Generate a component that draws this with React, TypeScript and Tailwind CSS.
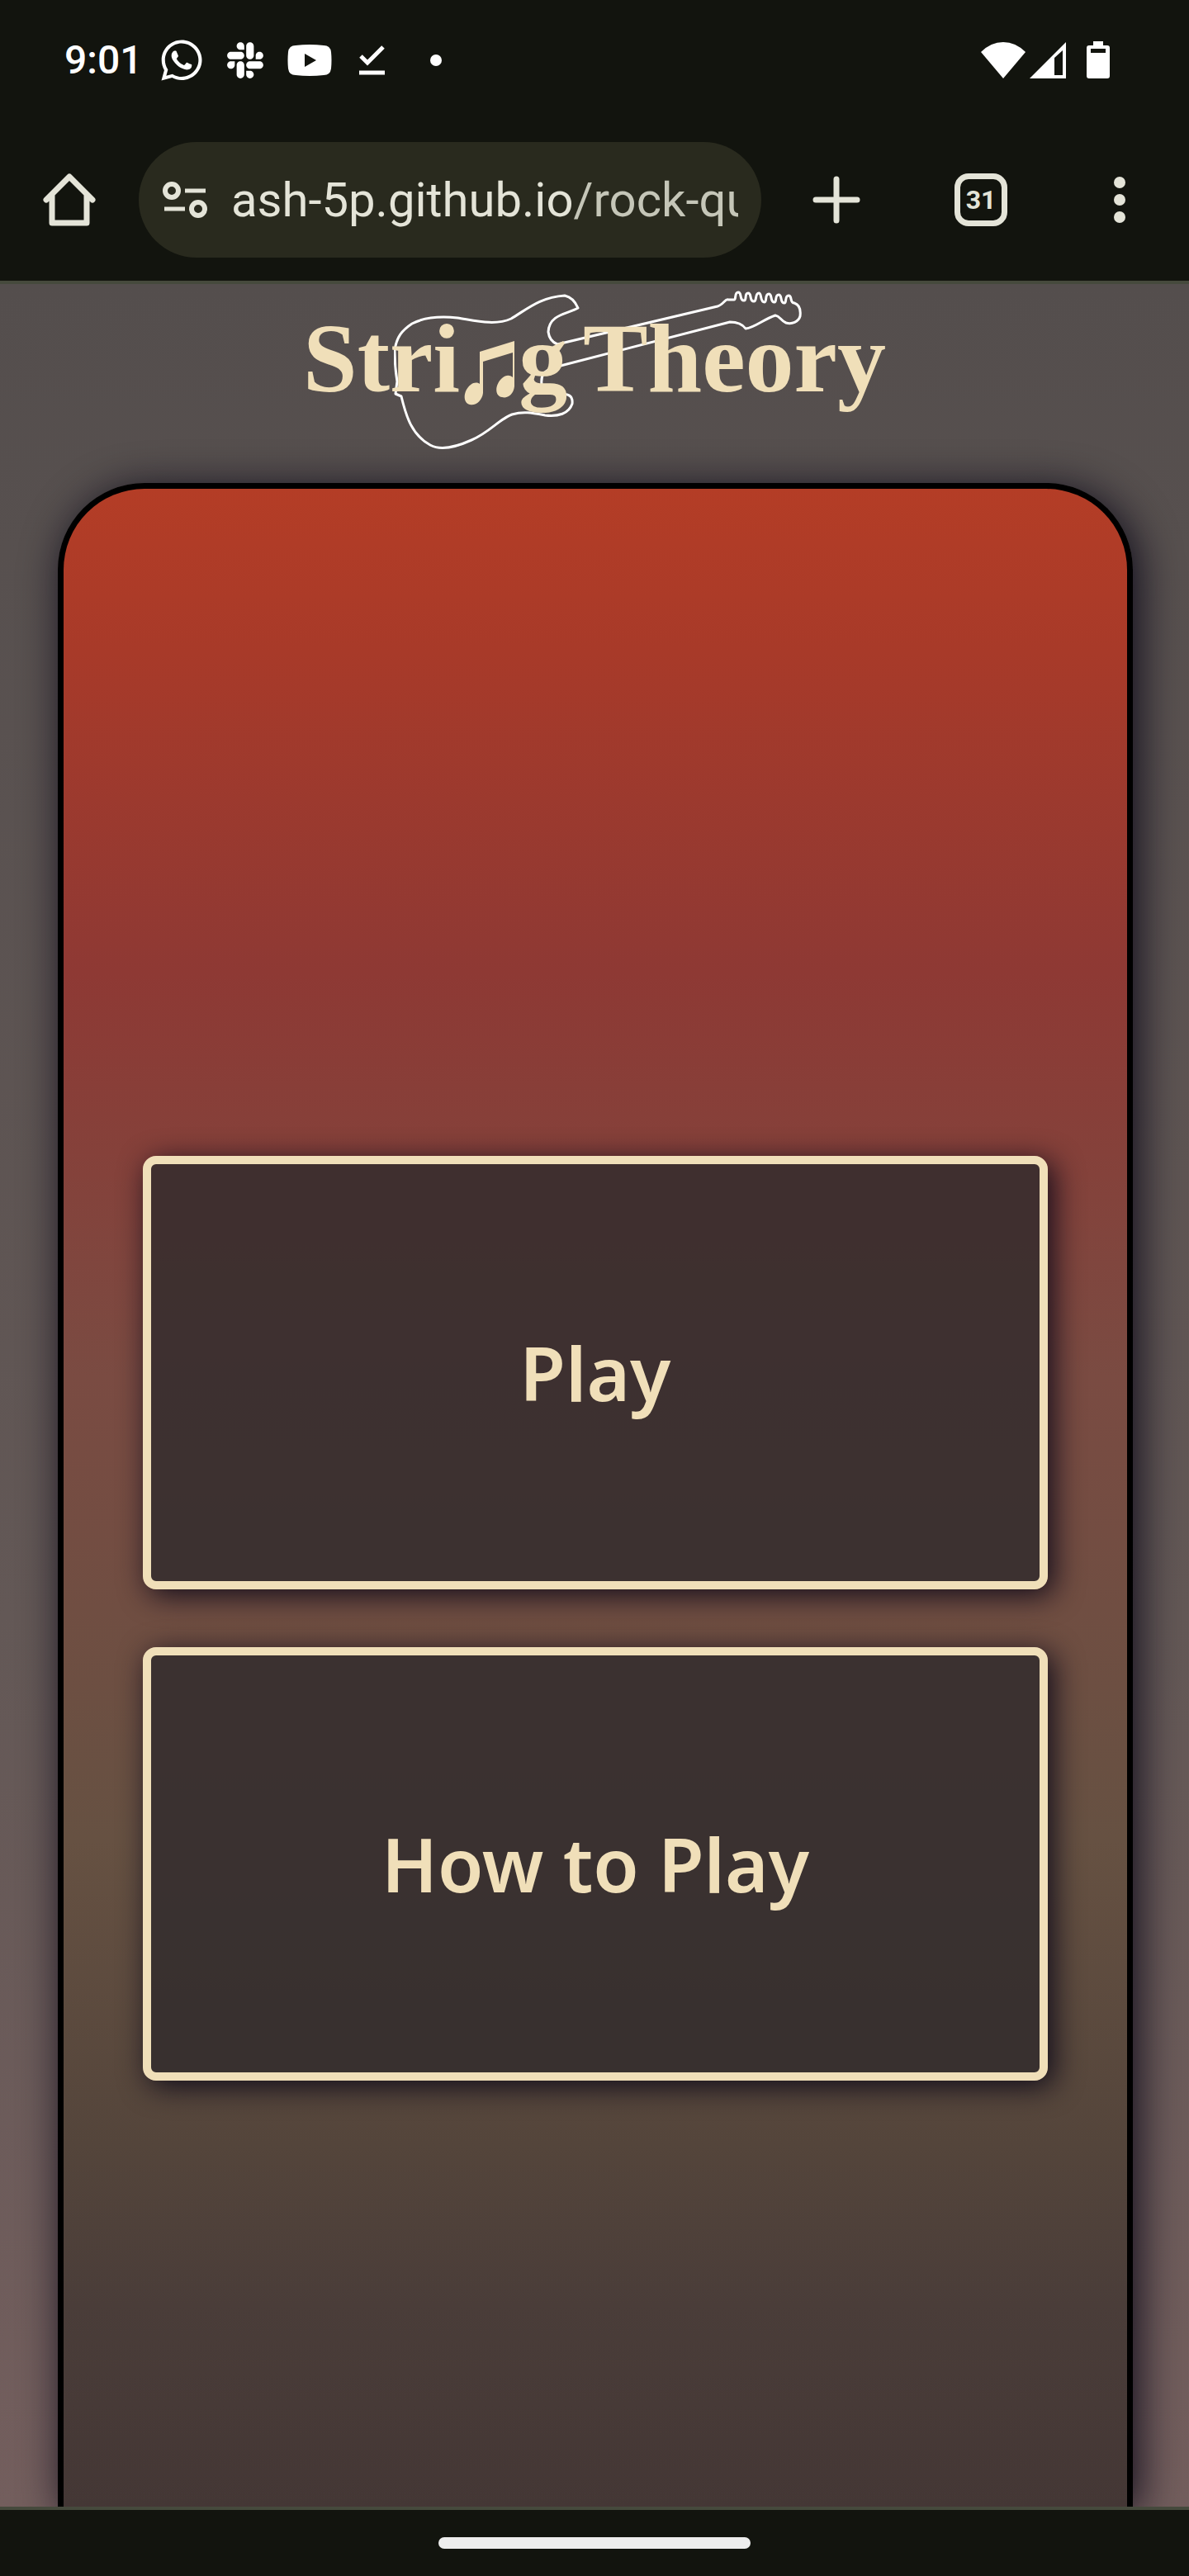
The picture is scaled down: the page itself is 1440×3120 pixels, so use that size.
import { FaWhatsapp, FaSlack } from "react-icons/fa";

function StatusBar() {
  return (
    <header className="flex h-[146px] items-center justify-between pl-[78px] pr-[96px] text-white">
      <div className="flex items-center">
        <time className="w-[94px] text-[48px] leading-none font-medium">9:01</time>
        <FaWhatsapp className="ml-5 size-[56px]" aria-label="WhatsApp" />
        <FaSlack className="ml-6 size-[50px]" aria-label="Slack" />
        <svg className="ml-[26px] h-[38px] w-[54px]" viewBox="0 0 54 38" aria-label="YouTube">
          <path fill="currentColor" fillRule="evenodd" d="M10 1Q27-1 44 1Q52 1 53 9Q54 19 53 29Q52 37 44 37Q27 39 10 37Q2 37 1 29Q0 19 1 9Q2 1 10 1ZM21 11V27L35 19Z" />
        </svg>
        <svg className="ml-8 h-[38px] w-[34px]" viewBox="0 0 34 38" aria-label="Download complete">
          <path fill="none" stroke="currentColor" strokeWidth="5" d="M3 14L11 22L30 3M1 34H32" />
        </svg>
        <span className="ml-[53px] size-[14px] rounded-full bg-white" />
      </div>
      <div className="flex items-center">
        <svg className="h-[46px] w-[54px]" viewBox="0 0 54 46" aria-label="Wi-Fi">
          <path fill="currentColor" d="M0 13Q12 1 27 1Q42 1 54 13L27 45Z" />
        </svg>
        <svg className="ml-1 h-[46px] w-[46px]" viewBox="0 0 46 46" aria-label="Signal">
          <path fill="currentColor" fillRule="evenodd" d="M45 1V45H1ZM31 20V41H41V11Z" />
        </svg>
        <svg className="ml-6 h-[46px] w-[28px]" viewBox="0 0 28 46" aria-label="Battery">
          <path fill="currentColor" fillRule="evenodd" d="M8 0H20V5H25Q28 5 28 8V42Q28 45 25 45H3Q0 45 0 42V8Q0 5 3 5H8ZM5 9V14H23V9Z" />
        </svg>
      </div>
    </header>
  );
}

function BrowserBar() {
  return (
    <nav className="flex h-[194px] items-center pr-[77px] pb-0.5 pl-[52px] text-[#e4e4d8]">
      <button aria-label="Home">
        <svg className="size-[64px]" viewBox="0 0 64 64">
          <path fill="none" stroke="currentColor" strokeWidth="7" strokeLinejoin="round" strokeLinecap="round" d="M4 32L32 4L60 32M11 26V60H53V26" />
        </svg>
      </button>
      <button className="ml-[52px] flex h-[140px] min-w-0 flex-1 items-center rounded-full bg-[#292a1e] pr-7 pl-[29px] text-left">
        <svg className="h-[44px] w-[54px] shrink-0" viewBox="0 0 54 44" aria-hidden="true">
          <g fill="none" stroke="currentColor" strokeWidth="6">
            <circle cx="11" cy="11" r="8" />
            <circle cx="43" cy="33" r="8" />
            <path strokeWidth="5" d="M27 11H52M2 33H27" />
          </g>
        </svg>
        <span className="ml-[29px] min-w-0 flex-1 overflow-hidden text-[58px] leading-[80px] whitespace-nowrap">
          ash-5p.github.io<span className="text-[#c5c6b8]">/rock-qu</span>
        </span>
      </button>
      <button className="ml-[62px]" aria-label="New tab">
        <svg className="size-[58px]" viewBox="0 0 58 58">
          <path stroke="currentColor" strokeWidth="7" strokeLinecap="round" d="M29 4V54M4 29H54" />
        </svg>
      </button>
      <button aria-label="31 open tabs" className="ml-[114px] flex size-[64px] items-center justify-center rounded-[17px] border-[7px] border-[#e4e4d8] text-[32px] leading-none font-bold">
        31
      </button>
      <button aria-label="Menu" className="ml-[129px] flex flex-col gap-[7px]">
        <span className="size-[14px] rounded-full bg-[#e4e4d8]" />
        <span className="size-[14px] rounded-full bg-[#e4e4d8]" />
        <span className="size-[14px] rounded-full bg-[#e4e4d8]" />
      </button>
    </nav>
  );
}

function Logo() {
  return (
    <h1 className="relative mx-auto flex h-[241px] w-[706px] items-start justify-between pt-[16px] font-['Liberation_Serif',serif] text-[118px] leading-[150px] font-bold whitespace-nowrap text-[#f0dfb9]">
      <svg className="absolute top-0 left-[110px] h-[241px] w-[510px]" viewBox="478 344 510 241" aria-hidden="true">
        <g fill="none" stroke="#fff" strokeWidth="3" strokeLinejoin="round">
          <path d="M479 425C481 408 488 400 500 392C515 384 535 383 555 385C575 388 600 395 620 386C640 374 655 360 685 358C694 360 698 366 701 373C690 380 666 380 665 402C666 410 671 415 676 417L870 371C877 369 880 361 883 363L890 363C893 363 890 354 895 354C900 354 896 364 902 364C906 364 902 355 907 355C912 355 908 365 914 365C918 365 915 355 920 355C924 355 921 366 927 366C930 366 927 356 932 356C937 356 933 366 939 366C942 366 939 357 944 357C949 357 945 367 951 367C954 367 951 358 956 358C961 358 957 367 963 367C969 369 971 375 970 383C968 390 960 393 953 391C946 388 946 383 940 382C925 387 915 397 904 398C899 391 892 390 885 390L676 444C657 449 656 456 657 466M676 479C690 475 695 480 694 489C690 501 677 505 661 503C645 500 635 498 621 502C605 508 595 523 572 533C550 543 533 545 522 539C500 527 493 505 487 480L480 477L482 462C480 450 479 440 479 425" />
        </g>
      </svg>
      <span className="relative">Stri</span>
      <svg className="relative mt-[53px] h-[78px] w-[62px]" viewBox="0 0 62 78" role="img" aria-label="n">
        <path fill="currentColor" d="M19 13L61 0V55C60 65 52 70 46 68C36 66 38 52 46 45C51 41 55 41 59 44V14L23 25V63C22 72 14 79 7 77C-3 74 0 59 8 53C12 50 16 50 19 52Z" />
      </svg>
      <span className="relative">g</span>
      <span className="relative ml-[14px]">Theory</span>
    </h1>
  );
}

function MenuButton({ children }: { children: string }) {
  return (
    <button className="h-[525px] w-full rounded-[16px] border-[10px] border-[#f0dfb9] bg-[#312b2d]/83 font-['Noto_Sans',sans-serif] text-[90px] font-semibold text-[#f0dfb9] shadow-[7px_7px_35px_rgba(8,5,22,0.9)]">
      {children}
    </button>
  );
}

export default function App() {
  return (
    <div className="flex min-h-screen flex-col bg-[#12140e] font-['Roboto',sans-serif]">
      <StatusBar />
      <BrowserBar />
      <main className="flex flex-1 flex-col overflow-hidden border-y-4 border-[#464a3d] bg-[linear-gradient(#544e4d,#635856_60%,#735e5d)]">
        <Logo />
        <section className="mr-[68px] ml-[70px] flex flex-1 flex-col gap-[70px] rounded-t-[105px] border-x-[7px] border-t-[7px] border-black bg-[linear-gradient(#b43d26_0%,#a83a29_8%,#8e3934_24%,#7a4b42_44%,#665142_67%,#54453b_82%,#4a3d39_90%,#443735_100%)] px-24 pt-[808px] shadow-[7px_7px_50px_rgba(8,5,22,0.9)]">
          <MenuButton>Play</MenuButton>
          <MenuButton>How to Play</MenuButton>
        </section>
      </main>
      <footer className="flex h-20 items-center justify-center">
        <span className="h-[14px] w-[378px] rounded-full bg-[#ededed]" />
      </footer>
    </div>
  );
}
